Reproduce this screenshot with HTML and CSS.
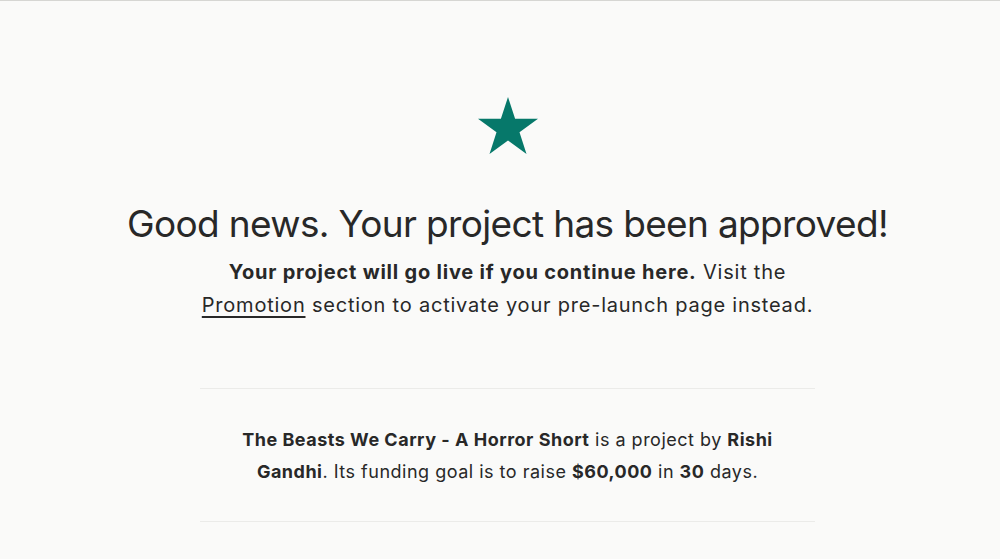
FILE: index.html
```html
<!DOCTYPE html>
<html lang="en">
<head>
  <meta charset="UTF-8">
  <title>Project approved</title>
  <link rel="stylesheet" href="styles.css">
</head>
<body>
  <div class="pagina">
    <div class="aprovado">
      <svg class="estrela" viewBox="0 0 60 57" width="60" height="57" aria-hidden="true">
        <polygon points="30,0 37.1,21.8 60,21.8 41.5,35.2 48.5,57 30,43.5 11.5,57 18.5,35.2 0,21.8 22.9,21.8" fill="#06786a"/>
      </svg>
      <h1>Good news. Your project has been approved!</h1>
      <p class="aviso"><strong>Your project will go live if you continue here.</strong> Visit the <a href="#">Promotion</a> section to activate your pre-launch page instead.</p>
      <div class="resumo">
        <p><strong>The Beasts We Carry - A Horror Short</strong> is a project by <strong>Rishi Gandhi</strong>. Its funding goal is to raise <strong>$60,000</strong> in <strong>30</strong> days.</p>
      </div>
    </div>
  </div>
</body>
</html>
```

FILE: styles.css
```css
body {
  margin: 0;
  background-color: #fafaf9;
  font-family: Inter, "Noto Sans", sans-serif;
  color: #282828;
  border-top: 1px solid #d6d6d3;
}

.pagina {
  display: flex;
  justify-content: center;
  padding-left: 15px;
}

.aprovado {
  width: 615px;
  display: flex;
  flex-direction: column;
  align-items: center;
  text-align: center;
  padding-top: 96px;
}

.estrela {
  display: block;
}

h1 {
  font-size: 37px;
  font-weight: 400;
  line-height: 44px;
  letter-spacing: -0.65px;
  margin: 48px -200px 0;
  white-space: nowrap;
}

.aviso {
  font-size: 20px;
  line-height: 33px;
  letter-spacing: 0.78px;
  margin: 10px 0 0;
}

.aviso a {
  color: inherit;
  text-decoration: underline;
  text-underline-offset: 4px;
}

.resumo {
  align-self: stretch;
  margin-top: 66px;
  border-top: 1px solid #ebebe9;
  border-bottom: 1px solid #ebebe9;
  padding: 35px 40px 33px;
}

.resumo p {
  margin: 0;
  font-size: 18px;
  line-height: 32px;
  letter-spacing: 0.5px;
}
```
